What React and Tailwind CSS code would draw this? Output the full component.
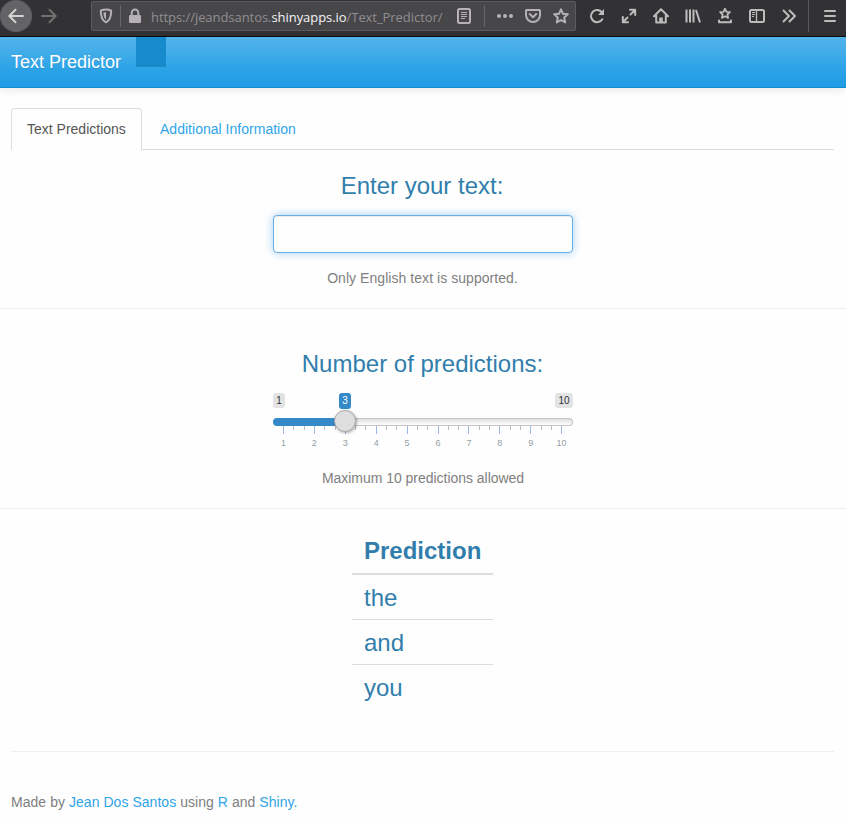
const Icon = ({ children, className = "w-8" }) => (
  <span className={`flex h-8 shrink-0 items-center justify-center ${className}`}>
    <svg width="16" height="16" viewBox="0 0 16 16" fill="none" stroke="currentColor" strokeWidth="2" strokeLinecap="round" strokeLinejoin="round" className="overflow-visible">
      {children}
    </svg>
  </span>
);

const STAR = "M8 1.300l2 4.500 4.800.5-3.600 3.300 1 4.800L8 12l-4.200 2.400 1-4.800L1.200 6.300l4.800-.5z";

function BrowserBar() {
  return (
    <div className="flex h-[37px] items-start border-b border-[#0c0c0d] bg-[#323234] text-[#bcbcbd]">
      <div className="flex h-8 w-8 items-center justify-center rounded-full bg-[#636365] text-[#d2d2d3]">
        <svg width="16" height="16" viewBox="0 0 16 16" fill="none" stroke="currentColor" strokeWidth="2" strokeLinecap="round" strokeLinejoin="round">
          <path d="M15 8H1.500M7.500 1.800L1.300 8l6.200 6.200" />
        </svg>
      </div>
      <Icon className="w-[34px] text-[#727273]">
        <path d="M1 8h13.500M8.500 1.800L14.700 8l-6.200 6.200" />
      </Icon>
      <div className="ml-[25px] mt-px flex h-[30px] w-[485px] items-center rounded-[2px] border border-[#5b5b5e] bg-[#474749] text-[#b5b1b5]">
        <Icon className="w-7">
          <path d="M8 1.500c2 0 3.900.5 5.200 1.200 0 5.700-1.200 9.500-5.200 11.800-4-2.300-5.200-6.100-5.200-11.800 1.300-.7 3.200-1.200 5.200-1.200z" />
          <path d="M8 4.200c-1 0-1.900.2-2.600.5.1 3.400 1 5.600 2.600 7z" fill="currentColor" stroke="none" />
        </Icon>
        <span className="h-[22px] w-px bg-[#66666a]" />
        <Icon className="w-7">
          <path d="M4.700 7V4.700a3.300 3.300 0 0 1 6.600 0V7" />
          <rect x="2" y="7" width="12" height="8" rx="1.200" fill="currentColor" stroke="none" />
        </Icon>
        <span className="ml-0.5 w-[299px] whitespace-nowrap pt-px font-['Open_Sans','Noto_Sans',sans-serif] text-[13px] leading-[30px] tracking-[-0.055px] text-[#918d92]">
          https://jeandsantos.<span className="text-[#f4f4f5]">shinyapps.io</span>/Text_Predictor/
        </span>
        <Icon className="w-7">
          <rect x="2" y="1" width="12" height="14" rx="1.500" />
          <path d="M5 4.500h6M5 6.500h6M5 8.500h6M5 10.500h4" strokeWidth="1" strokeLinecap="butt" />
        </Icon>
        <span className="ml-1.5 h-[22px] w-px bg-[#66666a]" />
        <Icon className="ml-1.5 w-7">
          <g fill="currentColor" stroke="none">
            <circle cx="2" cy="8" r="2" />
            <circle cx="8" cy="8" r="2" />
            <circle cx="14" cy="8" r="2" />
          </g>
        </Icon>
        <Icon className="w-7">
          <path d="M1.500 2h13a.5.500 0 0 1 .5.500V7A7 7 0 0 1 1 7V2.500a.5.500 0 0 1 .5-.5z" />
          <path d="M4.700 6L8 9.200 11.300 6" />
        </Icon>
        <Icon className="w-7">
          <path d={STAR} />
        </Icon>
      </div>
      <Icon className="ml-[5px] w-8">
        <path d="M13.300 11.200A6.100 6.100 0 1 1 13 4.500" />
        <path d="M15 1v6H9z" fill="currentColor" stroke="none" />
      </Icon>
      <Icon>
        <path d="M9.500 6.500L14 2M9 1.800h5.200V7M6.500 9.500L2 14M1.800 9v5.200H7" />
      </Icon>
      <Icon>
        <path d="M1 8.200L8 1.300l7 6.900M3.200 7.500v7h9.600v-7" />
        <path d="M6.200 15V9.500h3.600V15z" fill="currentColor" stroke="none" />
      </Icon>
      <Icon>
        <path d="M1.500 1.500v13M5 1.500v13M8.500 1.500v13M11 2l4 12.500" strokeLinecap="butt" />
      </Icon>
      <Icon>
        <path d="M8 .7l1.500 3.100 3.400.4-2.500 2.300.7 3.400L8 8.300 4.900 9.900l.7-3.400-2.500-2.300 3.400-.4z" strokeWidth="1.800" />
        <path d="M2 12.500v1.800h12v-1.800" />
      </Icon>
      <Icon>
        <rect x="1" y="2" width="14" height="12" rx="1.500" />
        <path d="M7.500 2v12" strokeWidth="1.300" />
        <path d="M3 4.500h3M3 6.500h3M3 8.500h2" strokeWidth="1" strokeLinecap="butt" />
      </Icon>
      <Icon>
        <path d="M2.500 2.500L8 8l-5.500 5.500M8.500 2.500L14 8l-5.500 5.500" />
      </Icon>
      <span className="ml-[3px] h-8 w-px bg-[#5a5a5d]" />
      <Icon className="ml-[5px] w-8">
        <path d="M3 3h10M3 8h10M3 13h10" />
      </Icon>
    </div>
  );
}

const values = [1, 2, 3, 4, 5, 6, 7, 8, 9, 10];
const ticks = Array.from({ length: 28 }, (_, i) => ({ x: Math.round(10 + i * 10.3), major: i % 3 === 0 }));

function Slider() {
  return (
    <div className="relative mx-auto h-14 w-[300px]">
      <div className="flex h-[15px] justify-between text-[10px] leading-[15px] text-[#333]">
        <span className="w-3 rounded-[3px] bg-[#e3e3e4] text-center">1</span>
        <span className="w-[18px] rounded-[3px] bg-[#e3e3e4] text-center">10</span>
      </div>
      <div className="mt-[10px] flex h-2">
        <div className="w-[72px] rounded-l-[4px] bg-[#3489c9]" />
        <div className="flex-1 rounded-r-[4px] border border-l-0 border-[#c6c3c5] bg-gradient-to-b from-[#dedede] to-white" />
      </div>
      <svg className="block" width="300" height="8" shapeRendering="crispEdges">
        {ticks.map((t) => (
          <rect key={t.x} x={t.x} y="0" width="1" height={t.major ? 8 : 4} fill={t.major ? "#9bb9df" : "#c0bcbf"} />
        ))}
      </svg>
      <div className="-ml-[5px] mt-1 flex w-[309px] text-center text-[9px] leading-[11px] text-[#949fa5]">
        {values.map((v) => (
          <span key={v} className="w-[30.950px]">{v}</span>
        ))}
      </div>
      <span className="absolute left-[66px] top-0 h-4 w-3 rounded-[3px] bg-[#3489c9] text-center text-[10px] leading-4 text-white">3</span>
      <span className="absolute left-[61px] top-[17px] h-[22px] w-[22px] rounded-full border border-[#aaa] bg-[#dedede] shadow-[1px_1px_3px_rgba(0,0,0,0.3)]" />
    </div>
  );
}

export default function App() {
  return (
    <div className="h-[824px] overflow-hidden bg-[#fefefe] font-['Liberation_Sans',Arial,sans-serif] text-[14px] leading-5 text-[#808080]">
      <BrowserBar />
      <nav className="flex h-[51px] items-start border-b border-[#178acc] bg-[linear-gradient(#54b4eb,#2fa4e7_60%,#1d9ce5)] pl-[11px] text-white shadow-[0_1px_10px_rgba(0,0,0,0.1)]">
        <span className="w-[125px] text-[18px] leading-[50px] [text-shadow:0_1px_0_rgba(0,0,0,0.1)]">Text Predictor</span>
        <span className="h-[30px] w-[30px] bg-[#178acc]" />
      </nav>
      <div className="ml-[11px] mr-3 mt-5 flex h-[42px] border-b border-[#ddd]">
        <span className="h-[42px] w-[131px] whitespace-nowrap rounded-t-[4px] border border-b-0 border-[#ddd] bg-[#fefefe] pl-[15px] leading-[41px] text-[#555]">Text Predictions</span>
        <span className="ml-[18px] leading-[42px] tracking-[0.020px] text-[#2fa4e7]">Additional Information</span>
      </div>
      <section className="h-[159px] border-b border-[#eee] pt-[23px] text-center">
        <h3 className="mr-[2px] text-[24px] leading-[26px] text-[#317eac]">Enter your text:</h3>
        <input aria-label="Enter your text" className="mx-auto mt-4 block h-[38px] w-[300px] rounded-[4px] border border-[#66afe9] bg-[#fefefe] px-3 shadow-[inset_0_1px_1px_rgba(0,0,0,0.075),0_0_8px_rgba(102,175,233,0.6)] outline-none" />
        <p className="mr-px mt-[15px] tracking-[0.050px]">Only English text is supported.</p>
      </section>
      <section className="h-[200px] border-b border-[#eee] pt-[42px] text-center">
        <h3 className="mb-[16px] mr-px text-[24px] leading-[26px] text-[#317eac]">Number of predictions:</h3>
        <Slider />
        <p className="mt-[19px] tracking-[-0.030px]">Maximum 10 predictions allowed</p>
      </section>
      <table className="ml-[352px] mt-5 w-[141px] border-collapse text-left text-[24px] leading-[34px] text-[#317eac]">
        <thead>
          <tr className="h-[45px] border-b-2 border-[#ddd]">
            <th className="p-0 pl-3 font-bold leading-[26px]">Prediction</th>
          </tr>
        </thead>
        <tbody>
          <tr className="h-[45px] border-b border-[#ddd]"><td className="p-0 pl-3 pt-[3px]">the</td></tr>
          <tr className="h-[45px] border-b border-[#ddd]"><td className="p-0 pl-3 pt-0.5">and</td></tr>
          <tr className="h-[45px]"><td className="p-0 pl-3 pt-0.5">you</td></tr>
        </tbody>
      </table>
      <footer className="ml-[11px] mr-3 mt-[42px] border-t border-[#eee] pt-10 tracking-[0.045px]">
        Made by <a className="text-[#2fa4e7]">Jean Dos Santos</a> using <a className="text-[#2fa4e7]">R</a> and <a className="text-[#2fa4e7]">Shiny.</a>
      </footer>
    </div>
  );
}
